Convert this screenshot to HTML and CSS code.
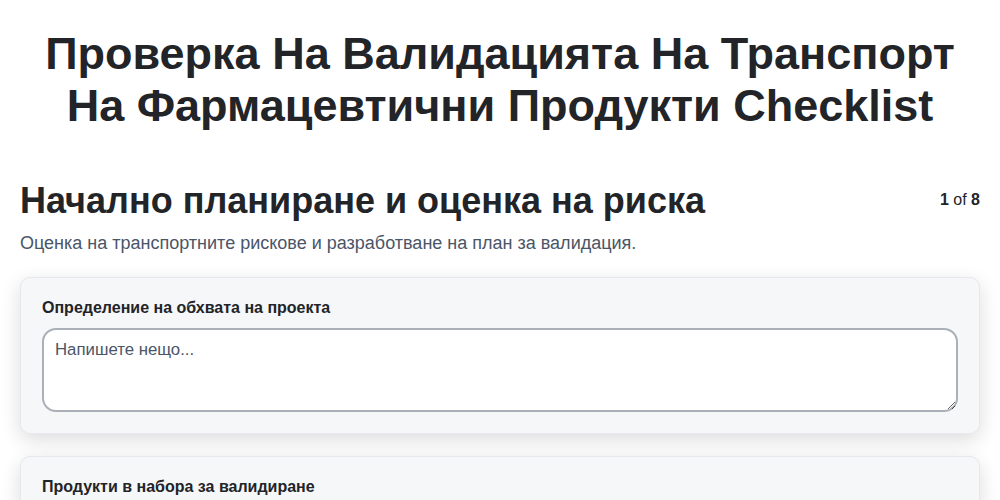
FILE: index.html
```html
<!DOCTYPE html>
<html lang="bg">
<head>
<meta charset="utf-8">
<link rel="stylesheet" href="styles.css">
</head>
<body>
<div class="page">
  <h1 class="title">Проверка На Валидацията На Транспорт На Фармацевтични Продукти Checklist</h1>
  <div class="section-head">
    <h2 class="section-title">Начално планиране и оценка на риска</h2>
    <div class="counter"><b>1</b> of <b>8</b></div>
  </div>
  <p class="section-desc">Оценка на транспортните рискове и разработване на план за валидация.</p>
  <div class="card">
    <label class="card-label">Определение на обхвата на проекта</label>
    <textarea class="field" placeholder="Напишете нещо..."></textarea>
  </div>
  <div class="card">
    <label class="card-label">Продукти в набора за валидиране</label>
    <textarea class="field" placeholder="Напишете нещо..."></textarea>
  </div>
</div>
</body>
</html>
```
FILE: styles.css
```css
* { box-sizing: border-box; }
html, body { margin: 0; padding: 0; background: #fff; }
body { font-family: "Liberation Sans", Arial, sans-serif; color: #222428; }
.page { padding: 0 20px; }
.title {
  margin: 28px 0 0;
  text-align: center;
  font-size: 45px;
  line-height: 52px;
  font-weight: 700;
  color: #222428;
}
.section-head {
  display: flex;
  justify-content: space-between;
  align-items: flex-start;
  margin-top: 46.5px;
}
.section-title {
  margin: 0;
  font-size: 36px;
  line-height: 44px;
  font-weight: 700;
}
.counter { font-size: 16px; line-height: 20px; margin-top: 11.5px; color: #222428; }
.section-desc {
  margin: 8.5px 0 0;
  font-size: 18px;
  line-height: 24px;
  color: #4a5568;
}
.card {
  background: #f6f7f9;
  border: 1px solid #e6e8ec;
  border-radius: 10px;
  box-shadow: 0 6px 20px rgba(0,0,0,0.14);
  padding: 20px 21px 21px;
  margin-top: 22px;
  display: flex;
  flex-direction: column;
}
.card-label { font-size: 16px; font-weight: 700; color: #222428; margin-bottom: 10px; line-height: 20px; }
.field {
  height: 84px;
  border: 2px solid #a9b0b8;
  border-radius: 14px;
  padding: 10px 11px;
  font-family: "Liberation Sans", Arial, sans-serif;
  font-size: 16.8px;
  background: #fff;
  resize: vertical;
}
.field::placeholder { color: #4a5568; }
```
